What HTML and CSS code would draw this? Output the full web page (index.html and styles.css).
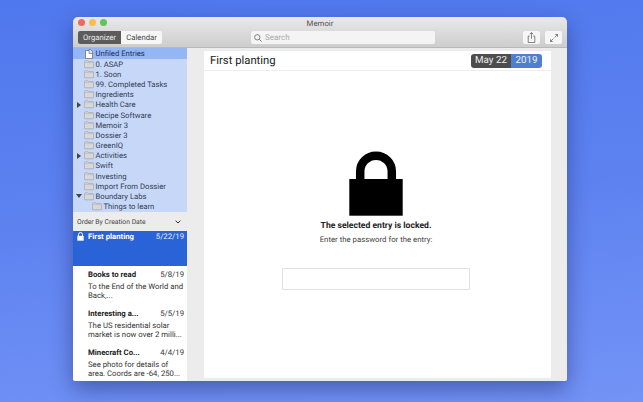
FILE: index.html
```html
<!DOCTYPE html>
<html lang="en">
<head>
  <meta charset="UTF-8">
  <meta name="viewport" content="width=device-width, initial-scale=1.0">
  <title>Memoir</title>
  <link rel="stylesheet" href="styles.css">
</head>
<body>
  <svg class="defs" width="0" height="0">
    <symbol id="folder" viewBox="0 0 10 9">
      <path d="M.4 1.800c0-.5.3-1 .8-1h2.600l.7.8h4.300c.5 0 .8.300.8.800v4.800c0 .3-.3.6-.6.6H1c-.3 0-.6-.3-.6-.6z" fill="#d8d8d8" stroke="#9a9a9a" stroke-width=".6"/>
      <path d="M.7 2.600h8.600" stroke="#b0b0b0" stroke-width=".5"/>
    </symbol>
  </svg>

  <div class="window">
    <header class="toolbar">
      <div class="title">Memoir</div>
      <div class="tools">
        <div class="segmented">
          <span class="seg seg-on">Organizer</span>
          <span class="seg">Calendar</span>
        </div>
        <div class="search">
          <svg width="8" height="8" viewBox="0 0 9 9"><circle cx="3.700" cy="3.700" r="3" fill="none" stroke="#666" stroke-width=".9"/><path d="M6 6l2.600 2.600" stroke="#666" stroke-width="1"/></svg>
          <span>Search</span>
        </div>
        <div class="tool-btn share-btn">
          <svg width="9" height="11" viewBox="0 0 9 12"><path d="M2.600 4.500H.9v7h7.200v-7H6.400M4.500 7.500V.8M2.700 2.400 4.500.6l1.800 1.800" fill="none" stroke="#555" stroke-width=".8"/></svg>
        </div>
        <div class="tool-btn">
          <svg width="8" height="8" viewBox="0 0 10 10"><path d="M5.800 4.200 9.200.8M6.600.6h2.800v2.800M4.200 5.800.8 9.200M3.400 9.400H.6V6.600" fill="none" stroke="#555" stroke-width=".9"/></svg>
        </div>
      </div>
    </header>

    <div class="main">
      <aside class="sidebar">
        <ul class="folders">
          <li class="folder folder-on">
            <svg class="doc" width="10" height="10" viewBox="0 0 10 10"><path d="M1.500 1.500h4l3 2.500v5.500h-7z" fill="#fff" stroke="#666" stroke-width=".7"/><path d="M5 .5h1.500l2 2v2H5z" fill="#ddd" stroke="#666" stroke-width=".6"/></svg>
            <span>Unfiled Entries</span>
          </li>
          <li class="folder"><svg class="icon"><use href="#folder"/></svg><span>0. ASAP</span></li>
          <li class="folder"><svg class="icon"><use href="#folder"/></svg><span>1. Soon</span></li>
          <li class="folder"><svg class="icon"><use href="#folder"/></svg><span>99. Completed Tasks</span></li>
          <li class="folder"><svg class="icon"><use href="#folder"/></svg><span>Ingredients</span></li>
          <li class="folder"><i class="arrow"></i><svg class="icon"><use href="#folder"/></svg><span>Health Care</span></li>
          <li class="folder"><svg class="icon"><use href="#folder"/></svg><span>Recipe Software</span></li>
          <li class="folder"><svg class="icon"><use href="#folder"/></svg><span>Memoir 3</span></li>
          <li class="folder"><svg class="icon"><use href="#folder"/></svg><span>Dossier 3</span></li>
          <li class="folder"><svg class="icon"><use href="#folder"/></svg><span>GreenIQ</span></li>
          <li class="folder"><i class="arrow"></i><svg class="icon"><use href="#folder"/></svg><span>Activities</span></li>
          <li class="folder"><svg class="icon"><use href="#folder"/></svg><span>Swift</span></li>
          <li class="folder"><svg class="icon"><use href="#folder"/></svg><span>Investing</span></li>
          <li class="folder"><svg class="icon"><use href="#folder"/></svg><span>Import From Dossier</span></li>
          <li class="folder"><i class="arrow arrow-down"></i><svg class="icon"><use href="#folder"/></svg><span>Boundary Labs</span></li>
          <li class="folder child"><svg class="icon"><use href="#folder"/></svg><span>Things to learn</span></li>
        </ul>

        <div class="order">
          <span>Order By Creation Date</span>
          <svg width="6" height="4" viewBox="0 0 6 4"><path d="M.6.7 3 3l2.400-2.300" fill="none" stroke="#333" stroke-width="1"/></svg>
        </div>

        <div class="entries">
          <div class="entry entry-on">
            <div class="entry-head">
              <svg class="entry-lock" width="7" height="9" viewBox="0 0 7 9"><path d="M1.500 4V2.600a2 2 0 0 1 4 0V4" fill="none" stroke="#fff" stroke-width="1"/><rect x=".3" y="3.800" width="6.400" height="4.900" fill="#fff"/></svg>
              <b>First planting</b><span>5/22/19</span>
            </div>
          </div>
          <div class="entry">
            <div class="entry-head"><b>Books to read</b><span>5/8/19</span></div>
            <p>To the End of the World and<br>Back,...</p>
          </div>
          <div class="entry">
            <div class="entry-head"><b>Interesting a...</b><span>5/5/19</span></div>
            <p>The US residential solar<br>market is now over 2 milli...</p>
          </div>
          <div class="entry">
            <div class="entry-head"><b>Minecraft Co...</b><span>4/4/19</span></div>
            <p>See photo for details of<br>area. Coords are -64, 250...</p>
          </div>
        </div>
      </aside>

      <section class="editor">
        <div class="page">
          <div class="page-head">
            <h1>First planting</h1>
            <div class="date"><span class="date-day">May 22</span><span class="date-year">2019</span></div>
          </div>
          <div class="locked">
            <svg class="big-lock" width="54" height="65" viewBox="0 0 54 65"><path d="M11.200 30V20.500a15.800 15.800 0 0 1 31.600 0V30" fill="none" stroke="#000" stroke-width="8.500"/><rect x=".3" y="28" width="53.400" height="36.700" fill="#000"/></svg>
            <h2>The selected entry is locked.</h2>
            <p>Enter the password for the entry:</p>
            <div class="password"></div>
          </div>
        </div>
      </section>
    </div>

    <div class="lights">
      <i class="light red"></i><i class="light yellow"></i><i class="light green"></i>
    </div>
  </div>
</body>
</html>
```

FILE: styles.css
```css
* {
  box-sizing: border-box;
}

html,
body {
  height: 100%;
}

body {
  margin: 0;
  overflow: hidden;
  font-family: Roboto, "Liberation Sans", sans-serif;
  text-rendering: geometricPrecision;
  background: linear-gradient(175deg, #5078ee 0%, #5d82f0 50%, #7393f6 100%);
  padding: 17px 0 0 73px;
}

.defs {
  position: absolute;
}

.window {
  position: relative;
  width: 494px;
  height: 364px;
  border-radius: 5px 5px 2px 2px;
  overflow: hidden;
  display: flex;
  flex-direction: column;
  box-shadow: 0 8px 22px rgba(20, 30, 90, 0.45);
}

.toolbar {
  height: 31px;
  flex-shrink: 0;
  background: linear-gradient(#e9e9e9, #cdcdcd);
  border-bottom: 1px solid #b8b8b8;
}

.title {
  text-align: center;
  font-size: 7.800px;
  line-height: 12px;
  color: #555;
  padding-top: 1px;
}

.tools {
  display: flex;
  align-items: center;
  padding: 1px 5px 0 5px;
}

.segmented {
  display: flex;
  height: 13px;
  border-radius: 2px;
  overflow: hidden;
  font-size: 7.700px;
  line-height: 14px;
  background: #f6f6f6;
  color: #444;
}

.seg {
  width: 41px;
  text-align: center;
  white-space: nowrap;
}

.seg-on {
  width: 43px;
  background: #5c5c5c;
  color: #eee;
}

.search {
  display: flex;
  align-items: center;
  gap: 3px;
  width: 184px;
  height: 13px;
  margin-left: 89px;
  padding-left: 3px;
  border-radius: 2px;
  background: #f4f4f4;
  font-size: 8px;
  color: #aaa;
}

.tool-btn {
  display: flex;
  align-items: center;
  justify-content: center;
  width: 17px;
  height: 13px;
  margin-left: 5px;
  border-radius: 2px;
  background: #f6f6f6;
}

.share-btn {
  margin-left: 88px;
}

.main {
  flex: 1;
  min-height: 0;
  display: flex;
}

.sidebar {
  width: 114px;
  flex-shrink: 0;
  display: flex;
  flex-direction: column;
  background: #fff;
}

.folders {
  list-style: none;
  margin: 0;
  padding: 0 0 1px;
  height: 164px;
  background: #c6d7f7;
}

.folder {
  position: relative;
  display: flex;
  align-items: center;
  gap: 1.500px;
  height: 10.200px;
  padding-left: 11px;
  font-size: 7.700px;
  color: #333c52;
  white-space: nowrap;
}

.folder-on {
  height: 11px;
  background: #95b6f5;
  color: #1c2c5c;
}

.child {
  padding-left: 19px;
}

.icon {
  width: 10px;
  height: 9px;
  flex-shrink: 0;
}

.doc {
  flex-shrink: 0;
}

.arrow {
  position: absolute;
  left: 4px;
  top: 2px;
  border-left: 4px solid #444;
  border-top: 3px solid transparent;
  border-bottom: 3px solid transparent;
}

.arrow-down {
  top: 3px;
  left: 3px;
  border-top: 4px solid #444;
  border-left: 3px solid transparent;
  border-right: 3px solid transparent;
  border-bottom: 0;
}

.order {
  display: flex;
  align-items: center;
  justify-content: space-between;
  height: 19px;
  padding: 0 6px 0 4px;
  background: #ececec;
  font-size: 6.800px;
  color: #444;
}

.entries {
  flex: 1;
  overflow: hidden;
}

.entry {
  padding: 4px 3px 0 15px;
  height: 39px;
  font-size: 7.750px;
  color: #333;
}

.entry-on {
  position: relative;
  height: 35px;
  padding-top: 1px;
  background: #2a62d8;
  color: #e6ecfa;
}

.entry-head {
  display: flex;
  justify-content: space-between;
  line-height: 10px;
  white-space: nowrap;
}

.entry-head b {
  color: #222;
}

.entry-on b {
  color: #fff;
}

.entry-lock {
  position: absolute;
  left: 4px;
  top: 1px;
}

.entry p {
  margin: 1.500px 0 0;
  line-height: 9.700px;
  white-space: nowrap;
}

.editor {
  flex: 1;
  min-width: 0;
  padding: 3px 16px 3px 17px;
  background: #ececec;
}

.page {
  height: 100%;
  background: #fff;
  display: flex;
  flex-direction: column;
}

.page-head {
  display: flex;
  align-items: center;
  justify-content: space-between;
  height: 20px;
  padding: 0 9px 0 6px;
  border-bottom: 1px solid #eee;
  flex-shrink: 0;
}

.page-head h1 {
  margin: 0;
  font-size: 11.300px;
  font-weight: 400;
  color: #222;
}

.date {
  display: flex;
  height: 14px;
  border-radius: 3px;
  overflow: hidden;
  font-size: 9.800px;
  line-height: 14px;
  color: #eee;
}

.date-day {
  width: 40px;
  text-align: center;
  background: #4d4d4d;
}

.date-year {
  width: 31px;
  text-align: center;
  background: #4f7fd0;
}

.locked {
  display: flex;
  flex-direction: column;
  align-items: center;
  padding: 80px 3px 0 0;
}

.big-lock {
  display: block;
}

.locked h2 {
  margin: 4px 0 0;
  font-size: 8.600px;
  line-height: 12px;
  color: #222;
}

.locked p {
  margin: 2px 0 0;
  font-size: 7.800px;
  line-height: 12px;
  color: #444;
}

.password {
  width: 188px;
  height: 22px;
  margin-top: 22px;
  background: #fff;
  border: 1px solid #e2e2e2;
}

.lights {
  position: absolute;
  left: 5px;
  top: 2px;
  display: flex;
  gap: 4px;
}

.light {
  width: 7px;
  height: 7px;
  border-radius: 50%;
}

.red {
  background: #ec6a5e;
}

.yellow {
  background: #f4bf4f;
}

.green {
  background: #61c554;
}
```
